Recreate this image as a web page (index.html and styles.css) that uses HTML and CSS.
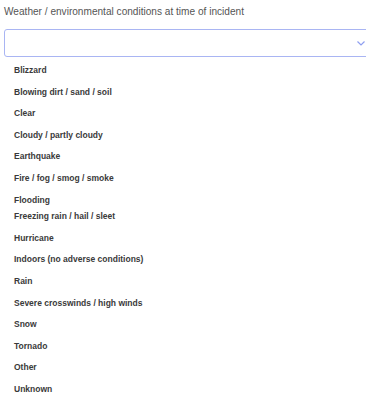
FILE: index.html
```html
<!DOCTYPE html>
<html lang="en">
<head>
    <meta charset="UTF-8">
    <meta name="viewport" content="width=device-width, initial-scale=1.0">
    <title>Incident conditions</title>
    <link rel="stylesheet" href="styles.css">
</head>
<body>

    <!-- Weather field -->
    <div class="field">
        <label class="field-label">Weather / environmental conditions at time of incident</label>
        <div class="select-box">
            <svg class="chevron" width="8" height="5" viewBox="0 0 8 5">
                <polyline points="0.5,0.5 4,4 7.5,0.5" fill="none" stroke="#8f9ff0" stroke-width="1.2"/>
            </svg>
        </div>

        <!-- Options -->
        <div class="options">
            <div class="option">Blizzard</div>
            <div class="option">Blowing dirt / sand / soil</div>
            <div class="option">Clear</div>
            <div class="option">Cloudy / partly cloudy</div>
            <div class="option">Earthquake</div>
            <div class="option">Fire / fog / smog / smoke</div>
            <div class="option">Flooding</div>
            <div class="option tight">Freezing rain / hail / sleet</div>
            <div class="option">Hurricane</div>
            <div class="option">Indoors (no adverse conditions)</div>
            <div class="option">Rain</div>
            <div class="option">Severe crosswinds / high winds</div>
            <div class="option">Snow</div>
            <div class="option">Tornado</div>
            <div class="option">Other</div>
            <div class="option">Unknown</div>
        </div>
    </div>

</body>
</html>
```

FILE: styles.css
```css
body {
    margin: 0;
    font-family: "Liberation Sans", Arial, sans-serif;
    background-color: white;
    overflow: hidden;
}

/* Field */
.field {
    width: 370px;
    padding: 6px 0 0 4px;
}

.field-label {
    display: block;
    font-size: 10.1px;
    line-height: 12px;
    color: #555;
    margin-bottom: 11px;
}

.select-box {
    height: 26px;
    border: 1px solid #a9b5f3;
    border-radius: 3px;
    display: flex;
    align-items: center;
    justify-content: flex-end;
    padding-right: 8px;
}

.chevron {
    display: block;
}

/* Options list */
.options {
    padding: 3px 0 0 10px;
}

.option {
    height: 21.6px;
    line-height: 21.6px;
    font-size: 8.5px;
    font-weight: 700;
    color: #3a3a3a;
    white-space: nowrap;
}

.option.tight {
    margin-top: -5px;
}
```
